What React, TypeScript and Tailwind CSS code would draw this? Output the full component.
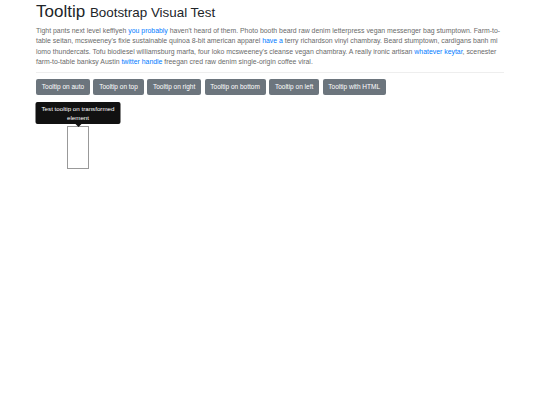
export default function App() {
  const buttons = [
    "Tooltip on auto",
    "Tooltip on top",
    "Tooltip on right",
    "Tooltip on bottom",
    "Tooltip on left",
    "Tooltip with HTML",
  ];

  return (
    <div
      className="h-[405px] w-[540px] bg-white"
      style={{ fontFamily: '"Liberation Sans", Arial, sans-serif' }}
    >
      <div className="w-[468px] ml-[36px] pt-[1px]">
        <h1 className="text-[17px] leading-[20px] mt-[1px] text-[#212529] font-normal">
          Tooltip{" "}
          <small className="text-[13.4px]">Bootstrap Visual Test</small>
        </h1>
        <p className="mt-[3px] text-[6.9px] leading-[10.3px] text-[#6a6a6a]">
          Tight pants next level keffiyeh{" "}
          <a className="text-[#007bff]">you probably</a> haven't heard of them.
          Photo booth beard raw denim letterpress vegan messenger bag
          stumptown. Farm-to-table seitan, mcsweeney's fixie sustainable quinoa
          8-bit american apparel <a className="text-[#007bff]">have a</a> terry
          richardson vinyl chambray. Beard stumptown, cardigans banh mi lomo
          thundercats. Tofu biodiesel williamsburg marfa, four loko
          mcsweeney's cleanse vegan chambray. A really ironic artisan{" "}
          <a className="text-[#007bff]">whatever keytar</a>, scenester
          farm-to-table banksy Austin{" "}
          <a className="text-[#007bff]">twitter handle</a> freegan cred raw
          denim single-origin coffee viral.
        </p>
        <hr className="mt-[5px] border-t border-[#eeeeee]" />
        <div className="mt-[6px] flex gap-[3.5px]">
          {buttons.map((b) => (
            <button
              key={b}
              className="h-[16px] px-[5.8px] rounded-[2px] bg-[#6c757d] text-white text-[6.5px] leading-none"
            >
              {b}
            </button>
          ))}
        </div>
        <div className="relative mt-[31px] ml-[31px] h-[43px] w-[22px] border border-[#999]">
          <div className="absolute bottom-[calc(100%+3px)] left-1/2 -translate-x-1/2 w-[85px] rounded-[2px] bg-[#111] px-[4px] py-[2px] text-center text-[6.2px] leading-[9px] text-white">
            Test tooltip on transformed element
            <span className="absolute top-full left-1/2 -translate-x-1/2 h-0 w-0 border-x-[3px] border-t-[3px] border-x-transparent border-t-[#111]" />
          </div>
        </div>
      </div>
    </div>
  );
}
